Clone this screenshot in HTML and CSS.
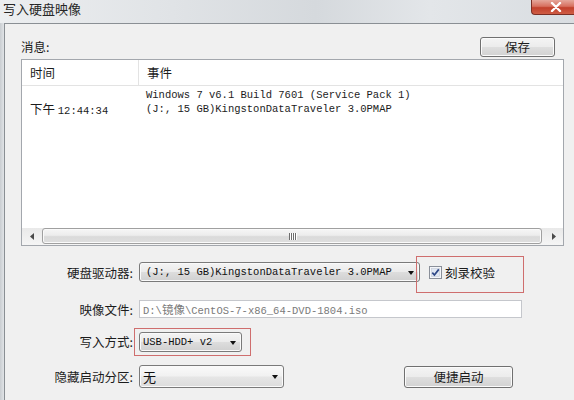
FILE: index.html
```html
<!DOCTYPE html>
<html lang="zh-CN">
<head>
<meta charset="utf-8">
<title>写入硬盘映像</title>
<link rel="stylesheet" href="styles.css">
</head>
<body>
<div class="window">
  <div class="titlebar">
    <span class="title">写入硬盘映像</span>
    <span class="close">
      <svg width="12" height="10" viewBox="0 0 12 10"><path d="M2 1 L10 9 M10 1 L2 9" stroke="#fff" stroke-width="2.4" stroke-linecap="round"/></svg>
    </span>
  </div>
  <div class="main">
    <div class="frame-left"></div>
    <div class="client">
      <div class="msg-head">
        <span class="msg-label">消息:</span>
        <button class="btn btn-save">保存</button>
      </div>
      <div class="listbox">
        <div class="lv-head">
          <div class="c1">时间</div>
          <div class="c2">事件</div>
        </div>
        <div class="lv-rows">
          <div class="row"><div class="c1"></div><div class="c2 mono">Windows 7 v6.1 Build 7601 (Service Pack 1)</div></div>
          <div class="row"><div class="c1">下午 <span class="mono">12:44:34</span></div><div class="c2 mono">(J:, 15 GB)KingstonDataTraveler 3.0PMAP</div></div>
        </div>
        <div class="hscroll">
          <div class="arrow"><svg width="4" height="7" viewBox="0 0 4 7"><path d="M4 0 L0 3.5 L4 7 Z" fill="#4a4a4a"/></svg></div>
          <div class="thumb"><span class="grip"></span><span class="grip"></span><span class="grip"></span><span class="grip"></span></div>
          <div class="arrow"><svg width="4" height="7" viewBox="0 0 4 7"><path d="M0 0 L4 3.5 L0 7 Z" fill="#4a4a4a"/></svg></div>
        </div>
      </div>

      <div class="frow r1">
        <span class="lbl">硬盘驱动器:</span>
        <div class="combo combo-drive"><span class="mono">(J:, 15 GB)KingstonDataTraveler 3.0PMAP</span><i class="caret"></i></div>
        <div class="mark mark-check">
          <span class="cb"><svg width="13" height="13" viewBox="0 0 13 13"><rect x="0.5" y="0.5" width="12" height="12" fill="#f4f6fa" stroke="#8a8f99"/><rect x="2.5" y="2.5" width="8" height="8" fill="#dfe6f2" stroke="#c3cad6" stroke-width="0.6"/><path d="M3.3 6.6 L5.4 9 L9.8 3.4" fill="none" stroke="#2d4786" stroke-width="1.7"/></svg></span>
          <span>刻录校验</span>
        </div>
      </div>

      <div class="frow r2">
        <span class="lbl">映像文件:</span>
        <div class="field"><span class="mono">D:\</span>镜像<span class="mono">\CentOS-7-x86_64-DVD-1804.iso</span></div>
      </div>

      <div class="frow r3">
        <span class="lbl">写入方式:</span>
        <div class="mark mark-mode">
          <div class="combo combo-mode"><span class="mono">USB-HDD+ v2</span><i class="caret"></i></div>
        </div>
      </div>

      <div class="frow r4">
        <span class="lbl">隐藏启动分区:</span>
        <div class="combo combo-hide"><span>无</span><i class="caret"></i></div>
        <button class="btn btn-quick">便捷启动</button>
      </div>
    </div>
  </div>
</div>
</body>
</html>
```
FILE: styles.css
```css
* { box-sizing: border-box; }

body {
  margin: 0;
  width: 574px;
  height: 400px;
  overflow: hidden;
  font-family: "Noto Sans CJK SC", "Noto Sans", sans-serif;
  font-size: 12.5px;
  color: #1c1c1c;
  background: #d9dde1;
}

.mono {
  font-family: "Liberation Mono", "DejaVu Sans Mono", monospace;
  font-size: 10.5px;
}

.window {
  display: flex;
  flex-direction: column;
  height: 400px;
}

.titlebar {
  height: 23px;
  display: flex;
  justify-content: space-between;
  align-items: flex-start;
  background: linear-gradient(90deg, #eceef0 0%, #e0e3e6 30%, #d5d9dd 55%, #e3e6e9 75%, #d9dde1 100%);
}

.title {
  padding-left: 3px;
  font-size: 13px;
  line-height: 18px;
  color: #262626;
}

.close {
  width: 43px;
  height: 15px;
  display: flex;
  align-items: center;
  justify-content: center;
  padding-left: 6px;
  background: linear-gradient(#e5a79b 0%, #d7705f 45%, #c2402c 55%, #cf5d45 100%);
  border-left: 1px solid #7b2f25;
  border-bottom: 1px solid #7b2f25;
  border-radius: 0 0 0 4px;
}

.main {
  flex: 1;
  display: flex;
}

.frame-left {
  width: 4px;
  background: linear-gradient(90deg, #c9cdd1, #e1e4e7);
}

.client {
  flex: 1;
  background: #f0f0f0;
  border-left: 1px solid #8a8f94;
  border-top: 1px solid #8a8f94;
  padding: 13px 10px 0 16px;
}

.msg-head {
  display: flex;
  justify-content: space-between;
  align-items: center;
  height: 20px;
  padding-right: 9px;
}

.msg-label { line-height: 20px; }

.btn {
  font-family: "Noto Sans CJK SC", sans-serif;
  font-size: 12.5px;
  color: #1c1c1c;
  border: 1px solid #707070;
  border-radius: 3px;
  background: linear-gradient(#f4f4f4 0%, #ececec 48%, #dedede 52%, #d2d2d2 100%);
  box-shadow: inset 0 0 0 1px #fbfbfb;
  padding: 0;
  line-height: 1;
}

.btn-save {
  width: 75px;
  height: 20px;
}

.listbox {
  margin-top: 2px;
  height: 187px;
  border: 1px solid #a3a7ad;
  background: #fff;
  display: flex;
  flex-direction: column;
}

.lv-head {
  height: 26px;
  display: flex;
  align-items: center;
  border-bottom: 1px solid #e3e3e3;
}

.c1 {
  width: 117px;
  padding-left: 8px;
  flex: none;
}

.lv-head .c1 {
  height: 25px;
  line-height: 25px;
  border-right: 1px solid #e3e3e3;
}

.c2 { padding-left: 7px; }

.lv-head .c2 { padding-left: 8px; }

.lv-rows {
  flex: 1;
  padding-top: 2px;
}

.row {
  display: flex;
  height: 14px;
  line-height: 14px;
}

.row .c1 { font-size: 12.5px; }

.hscroll {
  height: 17px;
  display: flex;
  align-items: stretch;
  background: linear-gradient(#e9e9e9, #f5f5f5);
}

.arrow {
  width: 19px;
  display: flex;
  align-items: center;
  justify-content: center;
}

.thumb {
  flex: 1;
  margin: 0 2px 1px 1px;
  border: 1px solid #a0a0a0;
  border-radius: 3px;
  background: linear-gradient(#f6f6f6 0%, #ececec 45%, #dadada 55%, #dedede 100%);
  box-shadow: inset 0 0 0 1px #fafafa;
  display: flex;
  justify-content: center;
  align-items: center;
  gap: 1px;
}

.grip {
  width: 1px;
  height: 7px;
  background: #6e6e6e;
  box-shadow: 1px 0 0 #fff;
}

.frow {
  display: flex;
  align-items: flex-start;
}

.lbl {
  width: 113px;
  padding-right: 1px;
  text-align: right;
  flex: none;
}

.combo {
  display: flex;
  align-items: center;
  justify-content: space-between;
  border: 1px solid #7a7a7a;
  border-radius: 3px;
  background: linear-gradient(#f4f4f4 0%, #ebebeb 48%, #dddddd 52%, #d0d0d0 100%);
  box-shadow: inset 0 0 0 1px #fafafa;
  padding: 0 5px 0 6px;
  color: #111;
  white-space: nowrap;
}

.caret {
  width: 0;
  height: 0;
  border-left: 3.5px solid transparent;
  border-right: 3.5px solid transparent;
  border-top: 4px solid #111;
  margin-top: 1px;
}

.mark {
  border: 1px solid #cf6e6e;
}

/* row 1 */
.r1 { margin-top: 10px; }
.r1 .lbl { margin-top: 7px; line-height: 20px; }
.combo-drive {
  margin-top: 6px;
  margin-left: 5px;
  width: 281px;
  height: 20px;
}
.mark-check {
  margin-left: -4px;
  width: 108px;
  height: 37px;
  display: flex;
  align-items: center;
  gap: 3px;
  padding: 0 0 4px 12px;
  font-size: 12.5px;
}
.cb { display: flex; }

/* row 2 */
.r2 { margin-top: 7px; }
.r2 .lbl { line-height: 18px; margin-top: 1px; }
.field {
  margin-left: 5px;
  width: 383px;
  height: 18px;
  border: 1px solid #c5c7cc;
  background: #fff;
  color: #7a7a7a;
  padding-left: 3px;
  line-height: 16px;
  font-size: 11.5px;
  white-space: nowrap;
  overflow: hidden;
}

/* row 3 */
.r3 { margin-top: 9px; }
.r3 .lbl { margin-top: 4px; line-height: 20px; }
.mark-mode { padding: 3px 8px 3px 4px; }
.combo-mode {
  width: 103px;
  height: 20px;
  padding-left: 3px;
}

/* row 4 */
.r4 { margin-top: 9px; }
.r4 .lbl { line-height: 23px; }
.combo-hide {
  margin-left: 5px;
  width: 145px;
  height: 23px;
  padding-left: 3px;
  font-size: 13px;
  background: linear-gradient(#fafafa 0%, #f1f1f1 48%, #e6e6e6 52%, #dcdcdc 100%);
}
.btn-quick {
  margin-left: 120px;
  margin-top: 1px;
  width: 109px;
  height: 22px;
}
```
